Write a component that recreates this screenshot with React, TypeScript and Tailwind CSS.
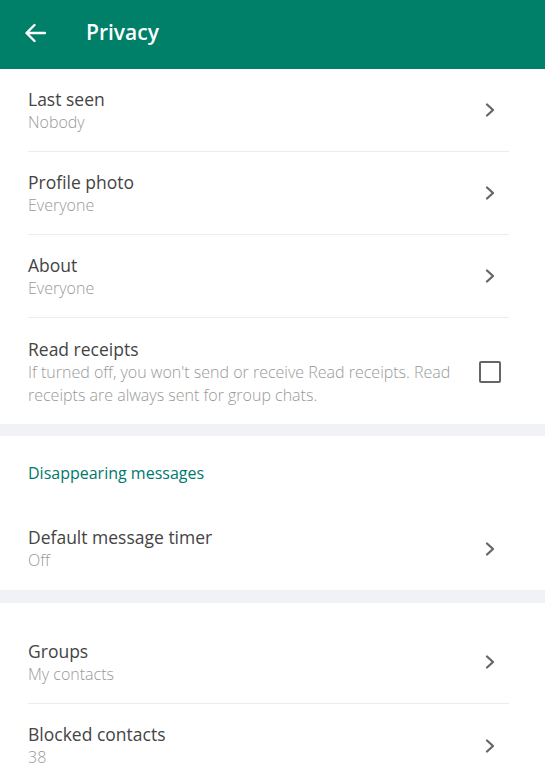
interface Item {
  title: string;
  sub: string;
}

const font = { fontFamily: '"Open Sans", "Noto Sans", sans-serif' };

function Chevron() {
  return (
    <svg width="12" height="16" viewBox="0 0 12 16" className="mr-[13px]">
      <path d="M3 2.5l6 5.5-6 5.5" fill="none" stroke="#666" strokeWidth="2.3" strokeLinecap="round" strokeLinejoin="round" />
    </svg>
  );
}

function Row({ title, sub, last }: Item & { last?: boolean }) {
  return (
    <div className="pl-7 pr-9">
      <div className={`flex h-[83px] items-center ${last ? '' : 'border-b border-[#e9edef]'}`}>
        <div className="flex-1">
          <div className="text-[17.5px] leading-6 text-[#444]">{title}</div>
          <div className="text-[16px] font-light leading-[23px] text-[#999]">{sub}</div>
        </div>
        <Chevron />
      </div>
    </div>
  );
}

export default function App() {
  return (
    <div className="min-h-screen bg-white" style={font}>
      <header className="flex h-[69px] items-center bg-[#008069] px-6 pb-1 text-white">
        <svg width="22" height="20" viewBox="0 0 22 20" className="mr-[40px]">
          <path d="M21 10H3M10.5 2L2.5 10l8 8" fill="none" stroke="white" strokeWidth="2.4" strokeLinecap="round" strokeLinejoin="round" />
        </svg>
        <h1 className="text-[21px] font-semibold">Privacy</h1>
      </header>

      <Row title="Last seen" sub="Nobody" />
      <Row title="Profile photo" sub="Everyone" />
      <Row title="About" sub="Everyone" />

      <div className="flex items-center pl-7 pr-11 pt-[19px] pb-[17px]">
        <div className="flex-1 pr-6">
          <div className="text-[17.5px] leading-6 text-[#444]">Read receipts</div>
          <div className="text-[16px] font-light leading-[23px] text-[#999]">
            If turned off, you won't send or receive Read receipts. Read receipts are always sent for group chats.
          </div>
        </div>
        <div className="h-[22px] w-[22px] rounded-[2px] border-2 border-[#666]" />
      </div>

      <div className="h-3 bg-[#f0f2f5]" />

      <div className="pl-7 pt-[25px] pb-[22px] text-[16px] leading-6 text-[#00796b]">Disappearing messages</div>
      <Row title="Default message timer" sub="Off" last />

      <div className="h-[13px] bg-[#f0f2f5]" />

      <div className="pt-[18px]">
        <Row title="Groups" sub="My contacts" />
        <Row title="Blocked contacts" sub="38" last />
      </div>
    </div>
  );
}
